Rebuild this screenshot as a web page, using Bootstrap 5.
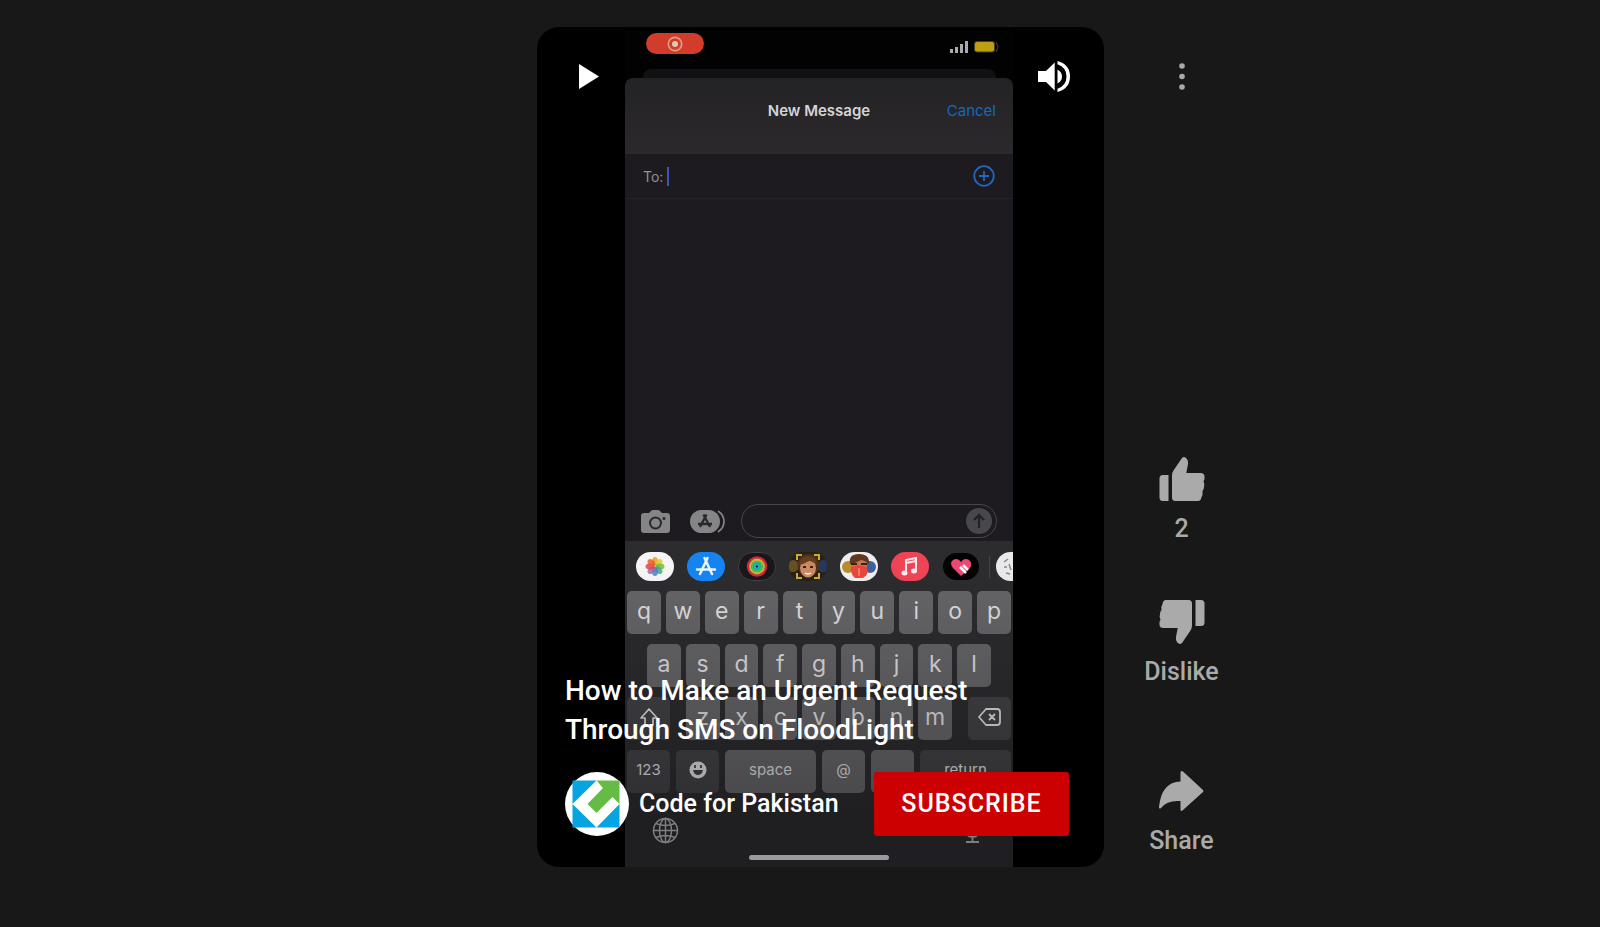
<!DOCTYPE html>
<html lang="en">
<head>
<meta charset="utf-8">
<meta name="viewport" content="width=device-width, initial-scale=1">
<title>How to Make an Urgent Request Through SMS on FloodLight</title>
<link href="https://cdn.jsdelivr.net/npm/bootstrap@5.3.0/dist/css/bootstrap.min.css" rel="stylesheet">
<style>
  body { background: #181818; font-family: Roboto, "Liberation Sans", sans-serif; }
  button { border: 0; background: none; padding: 0; color: inherit; font-weight: inherit; }
  svg { display: block; flex: none; }
  .shorts { display: grid; grid-template-columns: minmax(0, 537fr) minmax(0, 567fr) minmax(0, 496fr); padding: 27px 0 60px; min-height: 100vh; }
  .player { grid-column: 2; background: #000; border-radius: 22px; padding: 0 91px 0 88px; }

  /* phone recording */
  .phone { font-family: Inter, "Liberation Sans", sans-serif; background: #1d1b20; color: #d5d4d7; min-width: 0; }
  .status { height: 51px; background: #020203; padding: 6px 14px 0 21px; }
  .rec-pill { width: 58px; height: 21px; border-radius: 11px; background: #d23c2b; }
  .sheet-back { height: 9px; margin: 0 3px 0 -3px; border-radius: 8px 8px 0 0; background: #111013; }
  .sheet { background: #020203; }
  .sheet-head { height: 76px; padding: 21px 17px 0; border-radius: 8px 8px 0 0; background: linear-gradient(#232225, #2c292c); font-size: 15px; line-height: 24px; display: grid; grid-template-columns: 1fr auto 1fr; }
  .sheet-head strong { grid-column: 2; }
  .sheet-head a { color: #1668bd; text-align: right; }
  .to-row { height: 45px; padding: 0 18px; border-bottom: 1px solid #242329; font-size: 14px; color: #929196; }
  .caret { width: 2px; height: 19px; background: #4255b5; margin-left: 4px; }
  .bare-input { background: transparent; border: 0; min-width: 0; color: inherit; outline: 0; }
  .compose { padding: 0 16px 3px; }
  .compose-box { border: 1px solid #47464b; border-radius: 17px; height: 34px; padding-right: 4px; margin-left: 16px; min-width: 0; }
  .keyboard { background: #2c2b2e; }
  .tray { padding: 11px 0 10px 11px; gap: 13px; }
  .tray svg { border-radius: 15px; }
  .tray-rule { flex: none; width: 1px; height: 22px; background: #454448; margin: 0 -7px 0 -4px; }
  .keys { gap: 10px; }
  .key-row { display: flex; gap: 5px; padding: 0 2px; }
  .key-row.inset { padding: 0 22px; }
  .key { flex: 1 1 0; min-width: 0; height: 43px; border-radius: 5px; background: #656467; font-size: 23px; line-height: 40px; color: #dddcdf; display: flex; justify-content: center; align-items: center; padding-bottom: 3px; }
  .key.fn { flex: 0 0 43px; }
  .key.alt { background: #424145; }
  .key.word { font-size: 15px; }
  .key-row.last { gap: 6px; }
  .letters { display: flex; gap: 5px; flex: 1; margin: 0 11px; min-width: 0; }
  .foot { height: 74px; padding: 24px 27px 7px; color: #b4b3b6; }
  .home-bar { width: 140px; height: 5px; border-radius: 3px; background: #dddcdf; }

  /* player controls over the video */
  .shade { background: linear-gradient(transparent 65%, rgba(0,0,0,.3) 95%); border-radius: 22px; pointer-events: none; }
  .controls { padding: 34px 34px 0 42px; color: #fff; }
  .meta { padding: 0 35px 31px 28px; color: #fff; }
  .video-title { font-size: 28px; line-height: 39px; font-weight: 500; margin: 0 0 23px; }
  .channel { font-size: 25px; line-height: 30px; font-weight: 500; color: #fff; gap: 10px; }
  .subscribe { background: #c00; color: #fff; font-size: 25px; font-weight: 500; width: 195px; height: 64px; border-radius: 3px; letter-spacing: 1px; }

  .actions { grid-column: 3; width: 155px; color: #aaa; padding: 34px 0 11px; font-size: 25px; line-height: 30px; font-weight: 500; }
  .action { display: flex; flex-direction: column; align-items: center; gap: 12px; margin-bottom: 55px; }
  .action.share { margin: 26px 0 0; }
</style>
</head>
<body>
<main class="shorts">
  <section class="player position-relative d-flex overflow-hidden">
    <div class="phone d-flex flex-column flex-fill">
      <div class="status d-flex flex-column">
        <div class="d-flex justify-content-between">
          <div class="rec-pill d-flex align-items-center justify-content-center">
            <svg width="16" height="16" viewBox="0 0 16 16"><circle cx="8" cy="8" r="6.7" fill="none" stroke="#dc9c85" stroke-width="1.7"/><circle cx="8" cy="8" r="3" fill="#e5c9b4"/></svg>
          </div>
          <svg class="mt-2" width="49" height="12" viewBox="0 0 49 12"><path d="M0 8h3v4H0zM5 6h3v6H5zM10 3h3v9h-3zM15 0h3v12h-3z" fill="#aaa"/><rect x="24.500" y=".5" width="20" height="10.500" rx="2.500" fill="#bd9f12" stroke="#4b4013"/><path d="M46 1l2 5-2 5" fill="none" stroke="#454545"/></svg>
        </div>
        <div class="sheet-back mt-auto"></div>
      </div>
      <div class="sheet">
        <div class="sheet-head"><strong class="fw-semibold">New Message</strong><a href="#" class="text-decoration-none">Cancel</a></div>
      </div>
      <div class="to-row d-flex align-items-center">
        <label for="to">To:</label><span class="caret"></span>
        <input id="to" class="bare-input flex-fill" type="text">
        <button aria-label="Add contact"><svg width="22" height="22" viewBox="0 0 22 22" fill="none" stroke="#2367bd" stroke-width="1.8"><circle cx="11" cy="11" r="9.800"/><path d="M11 6v10M6 11h10"/></svg></button>
      </div>
      <div class="flex-fill"></div>
      <div class="compose d-flex align-items-center">
        <button aria-label="Camera"><svg width="29" height="23" viewBox="0 0 29 23"><path d="M3 3h5l2-2q1-1 2-1h5q1 0 2 1l2 2h5q3 0 3 3v14q0 3-3 3H3q-3 0-3-3V6q0-3 3-3Z" fill="#858487"/><circle cx="14.500" cy="13" r="5.500" fill="none" stroke="#29272b" stroke-width="2"/><circle cx="23" cy="8.500" r="1.500" fill="#29272b"/></svg></button>
        <button class="ms-3 ps-1" aria-label="Apps"><svg width="35" height="23" viewBox="0 0 35 23"><rect width="30" height="23" rx="11.500" fill="#858487"/><path d="M28 1q6 4 6 10.500T28 22" fill="none" stroke="#858487" stroke-width="1.700"/><path d="M16.500 4.500L10 17M13.500 4.500L20 17M8 14h14" stroke="#29272b" stroke-width="2.300" fill="none"/></svg></button>
        <div class="compose-box d-flex align-items-center flex-fill">
          <input class="bare-input flex-fill" type="text" aria-label="Message">
          <button aria-label="Send"><svg width="26" height="26" viewBox="0 0 26 26"><circle cx="13" cy="13" r="13" fill="#48474b"/><path d="M13 20V7M8 12l5-5 5 5" fill="none" stroke="#242226" stroke-width="2.300"/></svg></button>
        </div>
      </div>
      <div class="keyboard">
        <div class="tray d-flex align-items-center overflow-hidden">
          <svg width="38" height="29" viewBox="0 0 38 29"><rect width="38" height="29" fill="#f5f5f5"/><g transform="translate(19 14.500)" fill-opacity=".85"><ellipse cy="-5" rx="3" ry="4.500" fill="#f29a16"/><ellipse cy="-5" rx="3" ry="4.500" fill="#d9ce2b" transform="rotate(45)"/><ellipse cy="-5" rx="3" ry="4.500" fill="#7cb93b" transform="rotate(90)"/><ellipse cy="-5" rx="3" ry="4.500" fill="#44a987" transform="rotate(135)"/><ellipse cy="-5" rx="3" ry="4.500" fill="#4a7fc4" transform="rotate(180)"/><ellipse cy="-5" rx="3" ry="4.500" fill="#9a6bae" transform="rotate(225)"/><ellipse cy="-5" rx="3" ry="4.500" fill="#dd4555" transform="rotate(270)"/><ellipse cy="-5" rx="3" ry="4.500" fill="#ea5a2c" transform="rotate(315)"/></g></svg>
          <svg width="38" height="29" viewBox="0 0 38 29"><rect width="38" height="29" fill="#1684f0"/><path d="M20.500 6L13 22M17.500 6L25 22M10 17.500h18" stroke="#eaf4ff" stroke-width="2.500" fill="none" stroke-linecap="round"/></svg>
          <svg width="38" height="29" viewBox="0 0 38 29"><rect x=".5" y=".5" width="37" height="28" rx="14" fill="#19171b" stroke="#434246"/><g fill="none" stroke-width="2.500"><circle cx="19" cy="14.500" r="9" stroke="#d5263f"/><circle cx="19" cy="14.500" r="6.700" stroke="#c3b73b"/><circle cx="19" cy="14.500" r="4.500" stroke="#42bd55"/><circle cx="19" cy="14.500" r="2.300" stroke="#20aebc"/></g></svg>
          <svg width="38" height="29" viewBox="0 0 38 29"><rect width="38" height="29" fill="#292116"/><circle cx="4" cy="14" r="6" fill="#67501f"/><circle cx="34" cy="14" r="6" fill="#26385f"/><path d="M9 18Q6 3 19 2t11 16l-4 4H13Z" fill="#4e2f1b"/><ellipse cx="19" cy="16" rx="8" ry="9.500" fill="#c98a62"/><path d="M10 13q1-9 9-9t9 9q-5-4-8-4-5 3-10 4Z" fill="#65401f"/><path d="M16 21q3 2 6 0" stroke="#fff" stroke-width="1.500" fill="none"/><path d="M14 15h3M21 15h3" stroke="#3b2013" stroke-width="2"/><path d="M8 8V3h5M25 3h5v5M8 21v5h5M25 26h5v-5" fill="none" stroke="#cbae2c" stroke-width="2"/></svg>
          <svg width="38" height="29" viewBox="0 0 38 29"><rect width="38" height="29" fill="#eeedf0"/><circle cx="8" cy="15" r="6" fill="#b98b29"/><circle cx="30" cy="15" r="6" fill="#405f9e"/><ellipse cx="19" cy="14" rx="8" ry="10" fill="#c07850"/><path d="M10 12Q8 2 19 2t10 10q-5-4-8-4-5 3-11 4Z" fill="#603820"/><path d="M11 15l7-2 9 2q2 8-4 11h-8q-5-4-4-11Z" fill="#e84638"/><path d="M11 12h6M21 12h6" stroke="#3b2013" stroke-width="2"/><path d="M19 16v8" stroke="#f88a75" stroke-width="1.500"/></svg>
          <svg width="38" height="29" viewBox="0 0 38 29"><rect width="38" height="29" fill="#ee4455"/><path d="M15 21V8l10-2v13M15 11l10-2" fill="none" stroke="#ffe9ec" stroke-width="2"/><ellipse cx="13.500" cy="21" rx="3" ry="2.500" fill="#ffe9ec"/><ellipse cx="23" cy="19" rx="3" ry="2.500" fill="#ffe9ec"/></svg>
          <svg width="38" height="29" viewBox="0 0 38 29"><rect x="1" y="1" width="36" height="27" rx="13.500" fill="#040304"/><path d="M19 24L11 16Q7 11 11 8q5-3 8 2 3-5 8-2 4 3 1 8Z" fill="#ee4774"/><path d="M18 15l6 6M21 13l5 5" stroke="#fff" stroke-width="2.500"/></svg>
          <span class="tray-rule"></span>
          <svg width="38" height="29" viewBox="0 0 38 29"><rect width="38" height="29" fill="#e9e8ea"/><path d="M8 10l4-3M8 15h3M10 21l4 1M13 12l2 6" stroke="#88878c" stroke-width="1.500"/></svg>
        </div>
        <div class="keys d-flex flex-column">
          <div class="key-row"><button class="key">q</button><button class="key">w</button><button class="key">e</button><button class="key">r</button><button class="key">t</button><button class="key">y</button><button class="key">u</button><button class="key">i</button><button class="key">o</button><button class="key">p</button></div>
          <div class="key-row inset"><button class="key">a</button><button class="key">s</button><button class="key">d</button><button class="key">f</button><button class="key">g</button><button class="key">h</button><button class="key">j</button><button class="key">k</button><button class="key">l</button></div>
          <div class="key-row"><button class="key fn alt" aria-label="Shift"><svg width="20" height="20" viewBox="0 0 20 20" fill="none" stroke="currentColor" stroke-width="1.700" stroke-linejoin="round"><path d="M10 2l8 9h-4v7H6v-7H2Z"/></svg></button>
            <div class="letters"><button class="key">z</button><button class="key">x</button><button class="key">c</button><button class="key">v</button><button class="key">b</button><button class="key">n</button><button class="key">m</button></div>
            <button class="key fn alt" aria-label="Delete"><svg width="23" height="18" viewBox="0 0 23 18" fill="none" stroke="currentColor" stroke-width="1.800" stroke-linejoin="round"><path d="M8 1h11q3 0 3 3v10q0 3-3 3H8L1 9ZM11 6l6 6M17 6l-6 6"/></svg></button></div>
          <div class="key-row last"><button class="key fn alt word">123</button><button class="key fn alt" aria-label="Emoji"><svg width="18" height="18" viewBox="0 0 18 18"><circle cx="9" cy="9" r="8.500" fill="#dddcdf"/><path d="M4 9h10q-1 5-5 5T4 9Z" fill="#424145"/><path d="M6 4v3M12 4v3" stroke="#424145" stroke-width="1.800"/></svg></button><button class="key word">space</button><button class="key fn word">@</button><button class="key fn word">.</button><button class="key alt word">return</button></div>
        </div>
        <div class="foot d-flex flex-column">
          <div class="d-flex justify-content-between">
            <button aria-label="Next keyboard"><svg width="27" height="27" viewBox="0 0 27 27" fill="none" stroke="currentColor" stroke-width="1.500"><circle cx="13.500" cy="13.500" r="12"/><ellipse cx="13.500" cy="13.500" rx="6" ry="12"/><path d="M13.500 1v25M1 13.500h25M4 6.500q9.500 4 19 0M4 20.500q9.500-4 19 0"/></svg></button>
            <button aria-label="Dictate"><svg width="27" height="27" viewBox="0 0 27 27" fill="none" stroke="currentColor" stroke-width="1.800"><rect x="9.500" y="1" width="8" height="14" rx="4"/><path d="M6 11q0 9 7.500 9T21 11M13.500 20v5M7 25h13"/></svg></button>
          </div>
          <div class="home-bar mt-auto mx-auto"></div>
        </div>
      </div>
    </div>

    <div class="shade position-absolute top-0 start-0 w-100 h-100"></div>
    <div class="controls position-absolute top-0 start-0 w-100 d-flex justify-content-between">
      <button aria-label="Pause"><svg width="20" height="31" viewBox="0 0 20 31"><path d="M0 3v25L20 15.500Z" fill="#fff"/></svg></button>
      <button aria-label="Mute"><svg width="32" height="31" viewBox="0 0 32 31" fill="#fff"><path d="M0 10h8l8.700-8.500v28L8 21H0ZM19.500 8.500q4.500 2.500 4.500 7t-4.500 7ZM19.500 0Q32 3.500 32 15.500T19.500 31v-3.300Q28.500 24.500 28.500 15.500T19.500 3.300Z"/></svg></button>
    </div>
    <div class="meta position-absolute bottom-0 start-0 w-100">
      <h1 class="video-title">How to Make an Urgent Request<br>Through SMS on FloodLight</h1>
      <div class="d-flex align-items-center justify-content-between">
        <a href="#" class="channel d-flex align-items-center text-decoration-none">
          <svg width="64" height="64" viewBox="0 0 64 64"><circle cx="32" cy="32" r="32" fill="#fff"/><path d="M7.500 8.500h24L7.500 32ZM7.500 32L31.500 55.500h-24ZM31.500 55.500L54.500 32v23.500Z" fill="#06a5e2"/><path d="M31.500 8.500h23V32l-7-7L31.500 41 22.500 32 38 16Z" fill="#64bc47"/></svg>
          Code for Pakistan</a>
        <button class="subscribe">SUBSCRIBE</button>
      </div>
    </div>
  </section>

  <aside class="actions d-flex flex-column align-items-center">
    <button aria-label="More actions"><svg width="32" height="31" viewBox="0 0 32 31" fill="#aaa"><circle cx="16" cy="5" r="2.800"/><circle cx="16" cy="15.500" r="2.800"/><circle cx="16" cy="26" r="2.800"/></svg></button>
    <button class="action mt-auto">
      <svg width="46" height="46" viewBox="0 0 46 46" fill="#aaa"><path id="thumb" d="M4 19H9.500V45H4Q.5 45 .5 41.500V22.500Q.5 19 4 19ZM13 19.500Q13 16.500 14.500 14.500L23 2Q25 0 27 2 29.500 4 29 8L27.300 17H41.500Q45.500 17 45.500 20.500 46 23 44.500 25.500 46 28 45 31 45 33.500 43.500 35 44 39 42.500 41 42 45 39 45H16.500Q13 45 13 41.500Z"/></svg>
      <span>2</span></button>
    <button class="action">
      <svg width="46" height="46" viewBox="0 0 46 46" fill="#aaa"><use href="#thumb" transform="rotate(180 23 23)"/></svg>
      <span>Dislike</span></button>
    <button class="action share">
      <svg width="46" height="46" viewBox="0 0 46 46" fill="#aaa"><path d="M22.500 4.500Q22.500 2 25 3.500L45 22Q46 23 45 24L25 42Q22.500 44 22.500 41.500V33Q9 32 3 40 1 41.500 1 39 3.500 14 22.500 13.500Z"/></svg>
      <span>Share</span></button>
  </aside>
</main>
<script src="https://cdn.jsdelivr.net/npm/bootstrap@5.3.0/dist/js/bootstrap.bundle.min.js"></script>
</body>
</html>
